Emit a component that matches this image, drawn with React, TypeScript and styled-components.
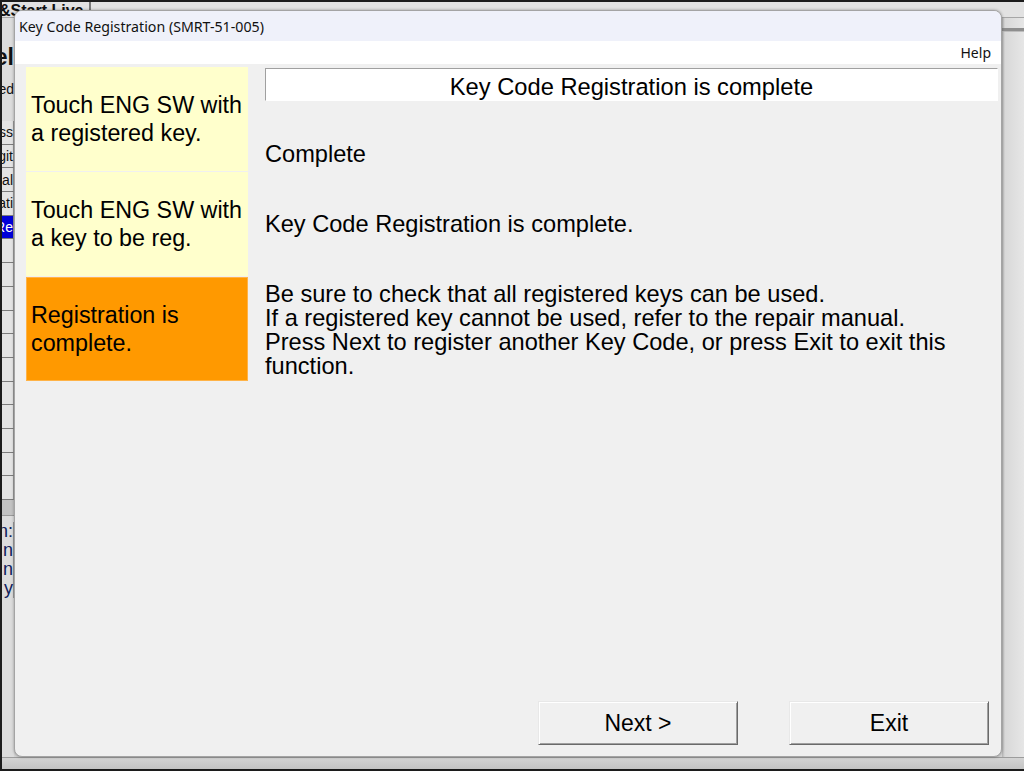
import React from "react";
import styled, { createGlobalStyle } from "styled-components";

const GlobalStyle = createGlobalStyle`
  html, body {
    margin: 0;
    padding: 0;
    overflow: hidden;
    background: #c8c8c8;
  }
`;

const Screen = styled.div`
  position: relative;
  width: 1024px;
  height: 771px;
  box-sizing: border-box;
  border-top: 2px solid #1c1c1c;
  border-left: 2px solid #1c1c1c;
  border-bottom: 2px solid #1c1c1c;
  background: #d8d8d8;
  display: flex;
  flex-direction: column;
  overflow: hidden;
  font-family: "Liberation Sans", Arial, sans-serif;
`;

/* ---------- application behind the dialog ---------- */

const TabStrip = styled.div`
  height: 16px;
  box-sizing: border-box;
  display: flex;
  background: #e2e2e2;
  border-bottom: 1px solid #a6a6a6;
  overflow: hidden;
`;

const Tab = styled.div`
  font-size: 16px;
  font-weight: bold;
  line-height: 18px;
  margin-left: -3px;
  padding-right: 6px;
  color: #111;
  border-right: 2px solid #7a7a7a;
  white-space: nowrap;
`;

const AppBody = styled.div`
  flex: 1;
  display: flex;
  min-height: 0;
`;

const LeftPane = styled.div`
  width: 12px;
  display: flex;
  flex-direction: column;
  background: #dcdcdc;
  overflow: hidden;
`;

const Tail = styled.div<{ $h: number; $size: number; $bold?: boolean; $pad?: number }>`
  height: ${(p) => p.$h}px;
  box-sizing: border-box;
  padding-top: ${(p) => p.$pad ?? 0}px;
  display: flex;
  justify-content: flex-end;
  font-size: ${(p) => p.$size}px;
  font-weight: ${(p) => (p.$bold ? "bold" : "normal")};
  line-height: ${(p) => p.$size}px;
  color: #111;
  white-space: nowrap;
`;

const Grid = styled.div`
  margin-top: 21px;
  display: flex;
  flex-direction: column;
  background: #e6e6e6;
`;

const Cell = styled.div<{ $selected?: boolean }>`
  height: 23.7px;
  box-sizing: border-box;
  display: flex;
  justify-content: flex-end;
  align-items: center;
  font-size: 14px;
  white-space: nowrap;
  border-bottom: 1px solid #7c7c7c;
  border-right: 1px solid #9a9a9a;
  background: ${(p) => (p.$selected ? "#0000d8" : "#e4e4e4")};
  color: ${(p) => (p.$selected ? "#fff" : "#111")};
`;

const Band = styled.div`
  height: 15px;
  background: #c2c2c2;
  border-bottom: 1px solid #9a9a9a;
`;

const NoteLine = styled.div<{ $first?: boolean }>`
  height: 19px;
  margin-top: ${(p) => (p.$first ? 6 : 0)}px;
  display: flex;
  justify-content: flex-end;
  align-items: center;
  font-size: 18px;
  color: #10205a;
  white-space: nowrap;
  border-right: 1px solid #9a9a9a;
`;

const MainPane = styled.div`
  flex: 1;
  display: flex;
  justify-content: flex-end;
  background: #d4d4d4;
`;

const RightRail = styled.div`
  width: 22px;
  background: linear-gradient(to right, #b4b4b4 0, #d8d8d8 3px, #e6e6e6 100%);
`;

const RailLine = styled.div`
  margin-top: 10px;
  height: 3px;
  background: #8e8e8e;
  border-bottom: 1px solid #bcbcbc;
`;

const StatusStrip = styled.div`
  height: 12px;
  box-sizing: border-box;
  border-top: 1px solid #9c9c9c;
  background: linear-gradient(#d4d4d4, #c4c4c4);
`;

/* ---------- dialog ---------- */

const Dialog = styled.div`
  position: absolute;
  top: 8px;
  left: 12px;
  width: 988px;
  height: 747px;
  box-sizing: border-box;
  border: 1px solid #a4a4a4;
  border-radius: 8px;
  overflow: hidden;
  display: flex;
  flex-direction: column;
  background: #f0f0f0;
  box-shadow: 0 0 3px rgba(0, 0, 0, 0.35);
`;

const TitleBar = styled.div`
  height: 30px;
  display: flex;
  align-items: center;
  padding-left: 4px;
  background: #eff1fa;
  font-family: "Noto Sans", "Open Sans", sans-serif;
  font-size: 14.2px;
  color: #111;
`;

const MenuBar = styled.div`
  height: 23px;
  display: flex;
  align-items: center;
  justify-content: flex-end;
  padding-right: 10px;
  background: #fff;
  font-family: "Noto Sans", "Open Sans", sans-serif;
  font-size: 14px;
  color: #111;
`;

const Content = styled.div`
  flex: 1;
  display: flex;
  flex-direction: column;
  padding: 3px 3px 11px 11px;
  min-height: 0;
`;

const Main = styled.div`
  flex: 1;
  display: grid;
  grid-template-columns: 222px 1fr;
  column-gap: 17px;
  align-items: start;
`;

const Steps = styled.div`
  display: flex;
  flex-direction: column;
  gap: 1px;
`;

const Step = styled.div<{ $active?: boolean }>`
  height: 104px;
  box-sizing: border-box;
  display: flex;
  align-items: center;
  padding-left: 5px;
  background: ${(p) => (p.$active ? "#ff9900" : "#ffffcc")};
  box-shadow: ${(p) => (p.$active ? "inset 0 0 0 1px #ffb347" : "none")};
  font-size: 23.3px;
  line-height: 28px;
  color: #000;
`;

const Detail = styled.div`
  padding-top: 1px;
  display: flex;
  flex-direction: column;
`;

const HeaderBox = styled.div`
  height: 33px;
  box-sizing: border-box;
  padding-top: 4px;
  border: 1px solid;
  border-color: #a0a0a0 #ffffff #ffffff #a0a0a0;
  background: #fff;
  text-align: center;
  font-size: 23.7px;
  line-height: 28px;
  color: #000;
  white-space: nowrap;
`;

const Message = styled.div<{ $gap: number }>`
  margin-top: ${(p) => p.$gap}px;
  font-size: 23.6px;
  line-height: 24px;
  color: #000;
  white-space: nowrap;
`;

const Footer = styled.div`
  display: flex;
  justify-content: flex-end;
  gap: 51px;
  padding-right: 9px;
`;

const Button = styled.button`
  width: 200px;
  height: 44px;
  box-sizing: border-box;
  padding: 0;
  background: #f0f0f0;
  border: 1px solid;
  border-color: #e8e8e8 #6a6a6a #6a6a6a #e8e8e8;
  box-shadow: inset 1px 1px #ffffff, inset -1px -1px #a0a0a0;
  font-family: "Liberation Sans", Arial, sans-serif;
  font-size: 23px;
  color: #000;
  cursor: pointer;
`;

const gridRows = ["ss", "git", "al", "ati", "Re", "", "", "", "", "", "", "", "", "", "", ""];

const App: React.FC = () => {
  return (
    <>
      <GlobalStyle />
      <Screen>
        <TabStrip>
          <Tab>&amp;Start Live</Tab>
        </TabStrip>
        <AppBody>
          <LeftPane>
            <Tail $h={28} $size={14} />
            <Tail $h={24} $size={23} $bold>
              el
            </Tail>
            <Tail $h={30} $size={14} $pad={12}>
              ed
            </Tail>
            <Grid>
              {gridRows.map((t, i) => (
                <Cell key={i} $selected={t === "Re"}>
                  {t}
                </Cell>
              ))}
            </Grid>
            <Band />
            <NoteLine $first>n:</NoteLine>
            <NoteLine>n</NoteLine>
            <NoteLine>n</NoteLine>
            <NoteLine>y</NoteLine>
          </LeftPane>
          <MainPane>
            <RightRail>
              <RailLine />
            </RightRail>
          </MainPane>
        </AppBody>
        <StatusStrip />

        <Dialog>
          <TitleBar>Key Code Registration (SMRT-51-005)</TitleBar>
          <MenuBar>Help</MenuBar>
          <Content>
            <Main>
              <Steps>
                <Step>
                  Touch ENG SW with
                  <br />
                  a registered key.
                </Step>
                <Step>
                  Touch ENG SW with
                  <br />
                  a key to be reg.
                </Step>
                <Step $active>
                  Registration is
                  <br />
                  complete.
                </Step>
              </Steps>
              <Detail>
                <HeaderBox>Key Code Registration is complete</HeaderBox>
                <Message $gap={41}>Complete</Message>
                <Message $gap={46}>Key Code Registration is complete.</Message>
                <Message $gap={46}>
                  Be sure to check that all registered keys can be used.
                  <br />
                  If a registered key cannot be used, refer to the repair manual.
                  <br />
                  Press Next to register another Key Code, or press Exit to exit this
                  <br />
                  function.
                </Message>
              </Detail>
            </Main>
            <Footer>
              <Button>Next &gt;</Button>
              <Button>Exit</Button>
            </Footer>
          </Content>
        </Dialog>
      </Screen>
    </>
  );
};

export default App;
